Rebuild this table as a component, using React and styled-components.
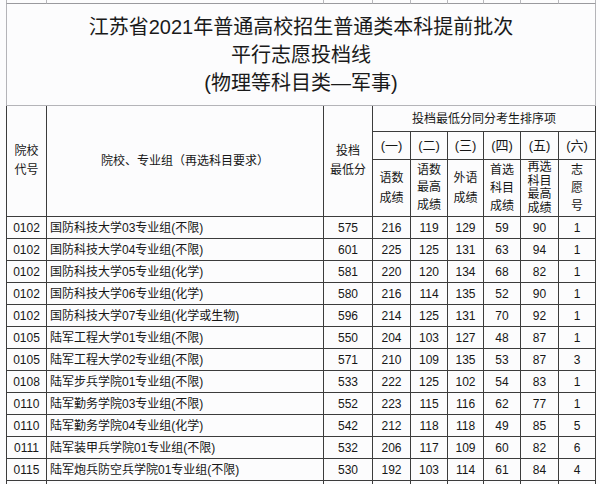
import React from "react";
import styled, { createGlobalStyle } from "styled-components";

const GlobalStyle = createGlobalStyle`
    html, body {
        margin: 0;
        padding: 0;
        background: #fcfcfd;
    }
    body {
        font-family: "Liberation Sans", "Noto Sans CJK SC", sans-serif;
        color: #161616;
        overflow: hidden;
    }
`;

const LINE = "#3c3c3c";
const LIGHT = "#b4b4b8";

const Page = styled.div`
    width: 600px;
    height: 484px;
    overflow: hidden;
`;

const Sheet = styled.div`
    display: grid;
    margin-left: 6px;
    width: 590px;
    grid-template-columns: 41px 277px 49px 38px 37px 36px 37px 38px 37px;
    grid-template-rows: 4px 102px 26px 28px 57px repeat(12, 22px) 10px;
`;

const Cell = styled.div`
    box-sizing: border-box;
    display: flex;
    flex-direction: column;
    align-items: ${p => (p.$left ? "flex-start" : "center")};
    justify-content: center;
    text-align: center;
    overflow: hidden;
    white-space: nowrap;
    grid-column: ${p => (p.$cols ? `span ${p.$cols}` : "auto")};
    grid-row: ${p => (p.$rows ? `span ${p.$rows}` : "auto")};
    border-right: 1px solid ${p => (p.$light ? LIGHT : LINE)};
    border-bottom: 1px solid ${p => (p.$light ? LIGHT : LINE)};
    border-left: ${p => (p.$first ? `1px solid ${p.$light ? LIGHT : LINE}` : "none")};
    padding-left: ${p => (p.$left ? "3px" : "0")};
    font-size: ${p => p.$size || 12}px;
    line-height: ${p => p.$lh || 14}px;
`;

const SliverCell = styled(Cell)`
    border-bottom-color: #9a9a9e;
    border-right-color: #b8b8bc;
`;

const Title = styled(Cell)`
    font-size: 20px;
    line-height: 28px;
    color: #1a1a1a;
    padding-top: 1px;
`;

const Line = styled.span`
    display: block;
`;

const columns = 9;

const rows = [
    ["0102", "国防科技大学03专业组(不限)", 575, 216, 119, 129, 59, 90, 1],
    ["0102", "国防科技大学04专业组(不限)", 601, 225, 125, 131, 63, 94, 1],
    ["0102", "国防科技大学05专业组(化学)", 581, 220, 120, 134, 68, 82, 1],
    ["0102", "国防科技大学06专业组(化学)", 580, 216, 114, 135, 52, 90, 1],
    ["0102", "国防科技大学07专业组(化学或生物)", 596, 214, 125, 131, 70, 92, 1],
    ["0105", "陆军工程大学01专业组(不限)", 550, 204, 103, 127, 48, 87, 1],
    ["0105", "陆军工程大学02专业组(不限)", 571, 210, 109, 135, 53, 87, 3],
    ["0108", "陆军步兵学院01专业组(不限)", 533, 222, 125, 102, 54, 83, 1],
    ["0110", "陆军勤务学院03专业组(不限)", 552, 223, 115, 116, 62, 77, 1],
    ["0110", "陆军勤务学院04专业组(化学)", 542, 212, 118, 118, 49, 85, 5],
    ["0111", "陆军装甲兵学院01专业组(不限)", 532, 206, 117, 109, 60, 82, 6],
    ["0115", "陆军炮兵防空兵学院01专业组(不限)", 530, 192, 103, 114, 61, 84, 4]
];

const orders = ["(一)", "(二)", "(三)", "(四)", "(五)", "(六)"];

const items = [
    { lines: ["语数", "成绩"], lh: 20 },
    { lines: ["语数", "最高", "成绩"], lh: 17.5 },
    { lines: ["外语", "成绩"], lh: 20 },
    { lines: ["首选", "科目", "成绩"], lh: 18 },
    { lines: ["再选", "科目", "最高", "成绩"], lh: 13.5 },
    { lines: ["志", "愿", "号"], lh: 18 }
];

const Stack = ({ lines }) => lines.map(l => <Line key={l}>{l}</Line>);

const Sliver = ({ light }) =>
    Array.from({ length: columns }, (_, i) => <SliverCell key={i} $first={i === 0} $light={light} />);

export default function App() {
    return (
        <Page>
            <GlobalStyle />
            <Sheet>
                <Sliver light />

                <Title $cols={9} $first $light>
                    <Line>江苏省2021年普通高校招生普通类本科提前批次</Line>
                    <Line>平行志愿投档线</Line>
                    <Line>(物理等科目类—军事)</Line>
                </Title>

                <Cell $first $rows={3} $lh={19}>
                    <Stack lines={["院校", "代号"]} />
                </Cell>
                <Cell $rows={3}>院校、专业组（再选科目要求）</Cell>
                <Cell $rows={3} $lh={19}>
                    <Stack lines={["投档", "最低分"]} />
                </Cell>
                <Cell $cols={6}>投档最低分同分考生排序项</Cell>
                {orders.map(o => (
                    <Cell key={o} $size={13}>
                        {o}
                    </Cell>
                ))}
                {items.map(it => (
                    <Cell key={it.lines.join("")} $lh={it.lh}>
                        <Stack lines={it.lines} />
                    </Cell>
                ))}

                {rows.map(([code, name, ...nums], r) => (
                    <React.Fragment key={r}>
                        <Cell $first>{code}</Cell>
                        <Cell $left>{name}</Cell>
                        {nums.map((n, i) => (
                            <Cell key={i}>{n}</Cell>
                        ))}
                    </React.Fragment>
                ))}

                {Array.from({ length: columns }, (_, i) => (
                    <Cell key={"end" + i} $first={i === 0} />
                ))}
            </Sheet>
        </Page>
    );
}
